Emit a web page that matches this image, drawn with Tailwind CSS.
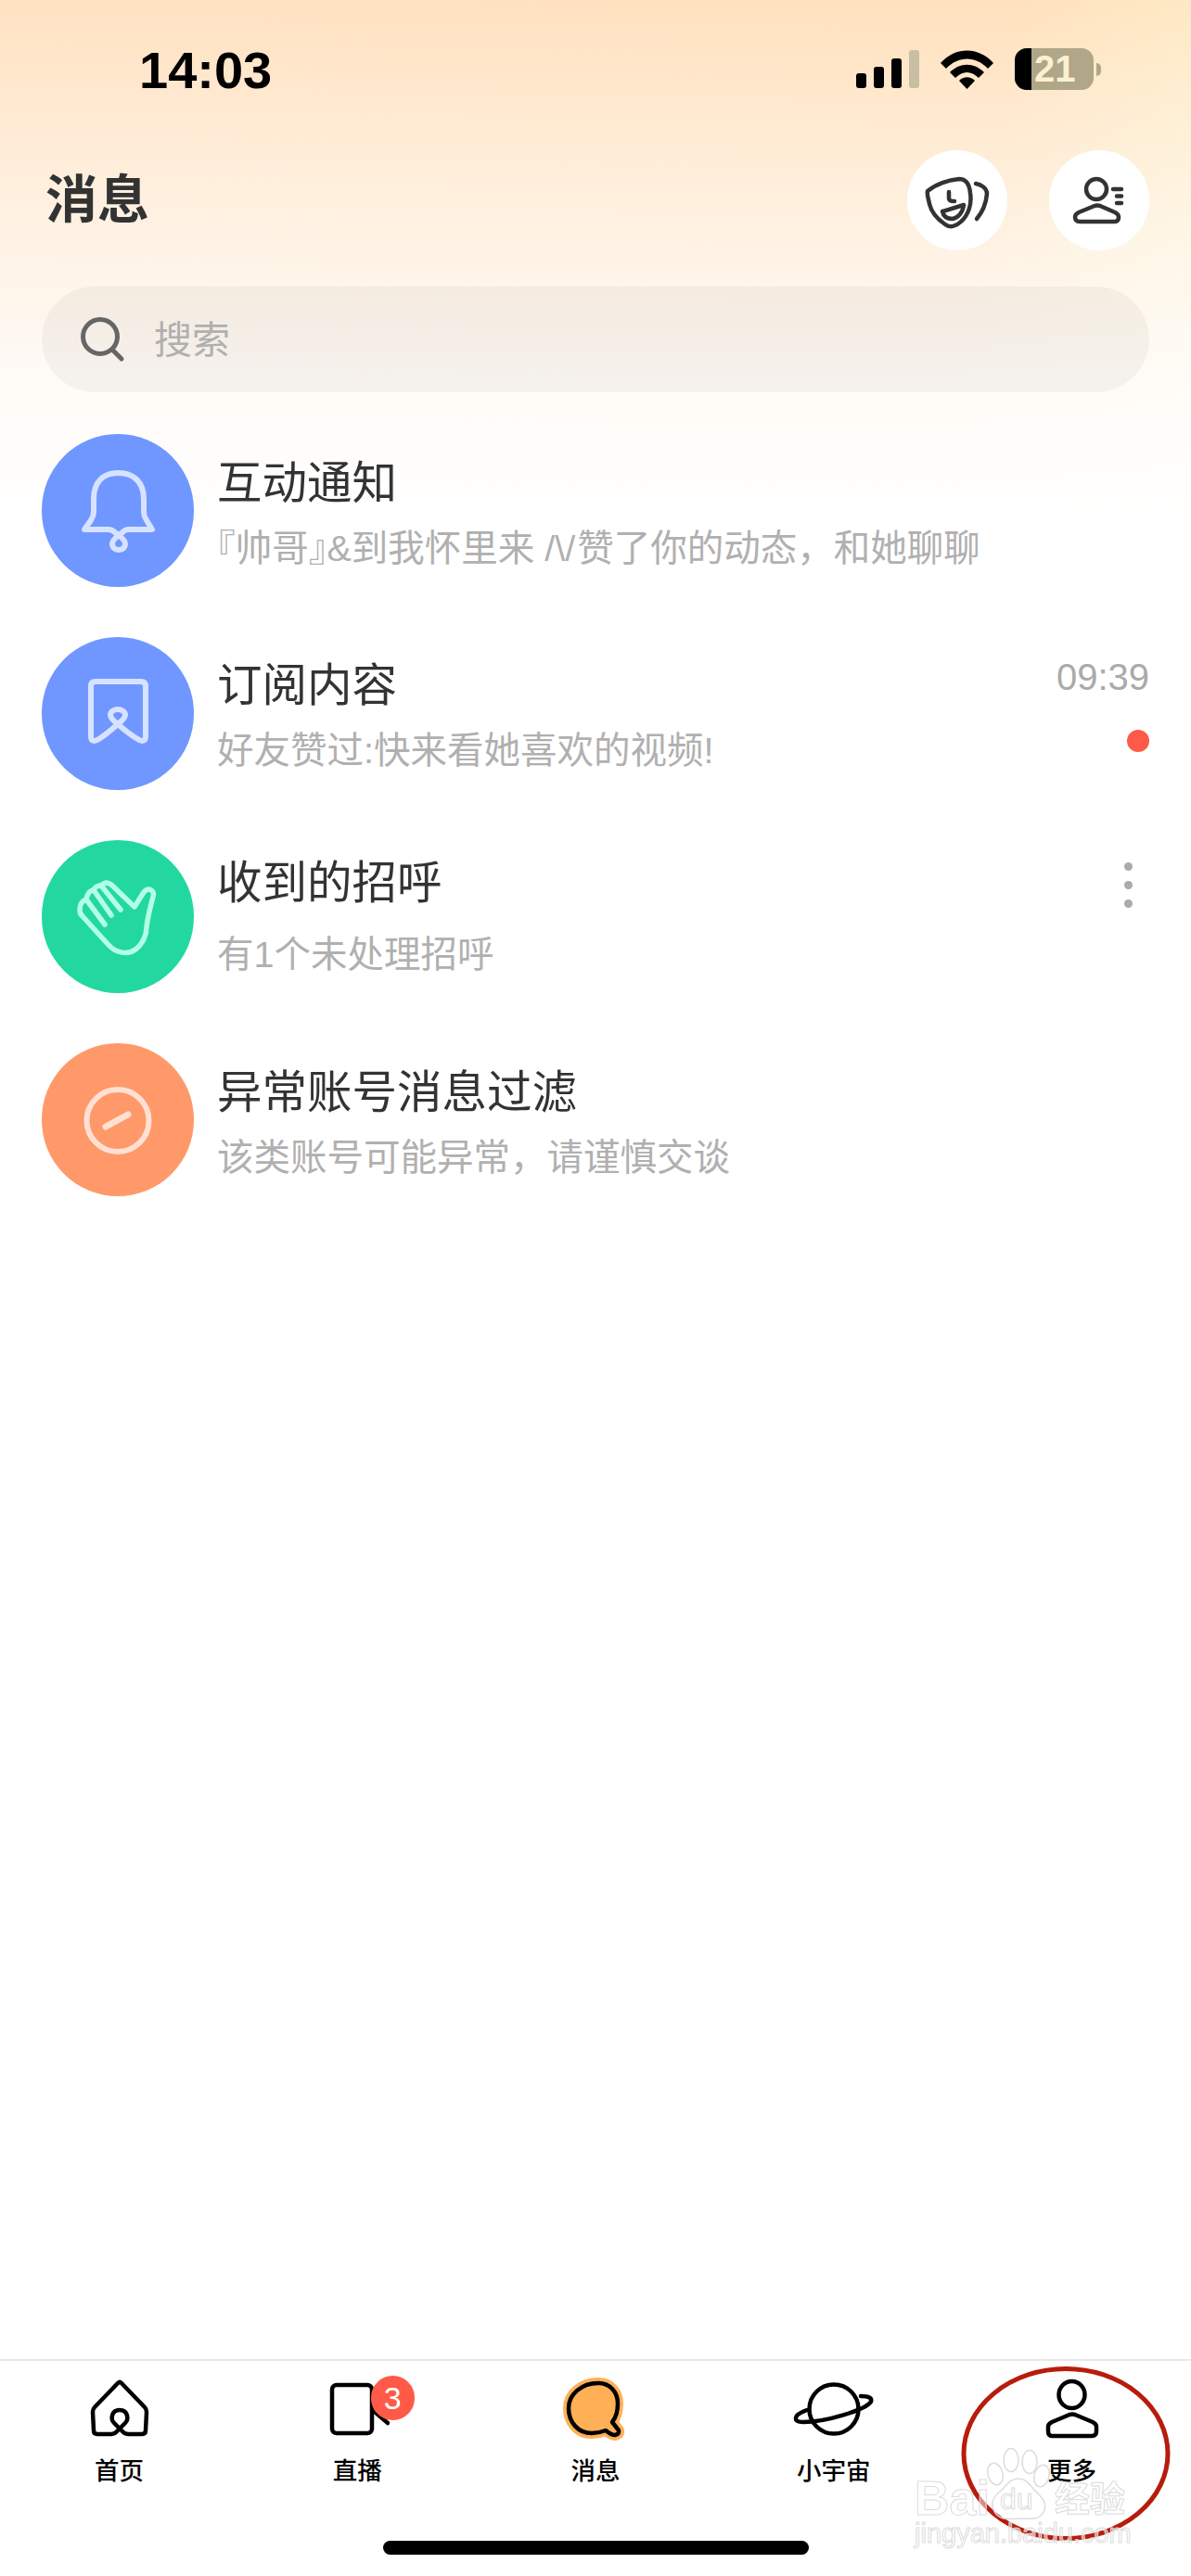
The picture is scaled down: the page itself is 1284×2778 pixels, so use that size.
<!DOCTYPE html>
<html lang="zh-CN">
<head>
    <meta charset="UTF-8">
    <meta name="viewport" content="width=device-width, initial-scale=1.0">
    <title>消息</title>
    <script src="https://cdn.jsdelivr.net/npm/@tailwindcss/browser@4"></script>
</head>
<body class="bg-white">
<div class="relative w-[1284px] h-[2778px] overflow-hidden flex flex-col bg-white bg-[linear-gradient(to_bottom,rgba(255,255,255,0),rgba(255,255,255,0.45)_200px,rgba(255,255,255,0.85)_400px,#fff_560px),linear-gradient(100deg,#ffe2c2,#ffe1bd_62%,#fdf5cf_88%)] font-['Liberation_Sans','Noto_Sans_CJK_SC',sans-serif]">

    <!-- status bar -->
    <div class="h-[162px] shrink-0 flex items-start pt-[48px] pl-[150px] pr-[97px] text-black">
        <span class="text-[56px] leading-[56px] font-bold">14:03</span>
        <div class="ml-auto flex items-center gap-[23px] pt-[4px]">
            <div class="flex items-end gap-[8px] h-[41px]">
                <div class="w-[11px] h-[16px] rounded-[3px] bg-black"></div>
                <div class="w-[11px] h-[23px] rounded-[3px] bg-black"></div>
                <div class="w-[11px] h-[32px] rounded-[3px] bg-black"></div>
                <div class="w-[11px] h-[41px] rounded-[3px] bg-[#c9bda3]"></div>
            </div>
            <svg class="w-[57px] h-[42px]" viewBox="0 0 57 42">
                <path d="M0 14 C16 -4 41 -4 57 14 L51 20 C38 6 19 6 6 20Z M10 24 C21 13 36 13 47 24 L41 30 C33 22 24 22 16 30Z M20 33 C25 28 32 28 37 33 L28.500 42Z" fill="#000"/>
            </svg>
            <div class="flex items-center">
                <div class="relative w-[85px] h-[45px] rounded-[13px] overflow-hidden bg-[#b0a688] flex">
                    <div class="w-[18px] h-full bg-black"></div>
                    <span class="ml-[3px] text-[40px] leading-[45px] font-bold text-[#fbf1d2]">21</span>
                </div>
                <div class="ml-[3px] w-[5px] h-[14px] rounded-r-full bg-[#b0a688]"></div>
            </div>
        </div>
    </div>

    <!-- header -->
    <div class="h-[108px] shrink-0 flex items-center pl-[49px] pr-[45px]">
        <h1 class="text-[56px] leading-[56px] font-bold text-[#333]">消息</h1>
        <div class="ml-auto flex gap-[45px]">
            <button class="w-[108px] h-[108px] rounded-full bg-white">
                <svg class="w-full h-full" viewBox="0 0 108 108" fill="none" stroke="#333" stroke-width="4.500" stroke-linecap="round" stroke-linejoin="round">
                    <path d="M22 44 C32 36 46 32 56 31 C63 31 67 36 68 46 C70 58 66 70 58 77 C53 82 46 84 41 80 C32 74 26 66 24 58 C23 52 21 48 22 44Z"/>
                    <path d="M74 36 C80 37 86 41 86 47 C85 58 81 67 75 74"/>
                    <path d="M45 45 V52 Q45 55 51 55"/>
                    <path d="M38 66 L61 59 C60 67 55 73 49 74 C43 74 39 71 38 66Z"/>
                </svg>
            </button>
            <button class="w-[108px] h-[108px] rounded-full bg-white">
                <svg class="w-full h-full" viewBox="0 0 108 108" fill="none" stroke="#333" stroke-width="4.500" stroke-linecap="round" stroke-linejoin="round">
                    <circle cx="51" cy="42" r="11"/>
                    <path d="M33 77 H71 Q75 77 75 72 Q75 69 71 67 L55 60 Q52 59 49 60 L32 67 Q28 69 28 72 Q28 77 33 77Z"/>
                    <path d="M69 42 H78 M73 49.500 H78 M73 57 H78"/>
                </svg>
            </button>
        </div>
    </div>

    <!-- search -->
    <div class="mt-[39px] mx-[45px] h-[114px] shrink-0 rounded-[57px] bg-black/[0.04] flex items-center pl-[41px]">
        <svg class="w-[50px] h-[50px]" viewBox="0 0 50 50" fill="none" stroke="#666" stroke-width="5" stroke-linecap="round">
            <circle cx="22" cy="22" r="18.500"/>
            <path d="M36 37 L45 46"/>
        </svg>
        <span class="ml-[30px] pt-[2px] text-[41px] leading-[41px] text-[#b0b0b0]">搜索</span>
    </div>

    <!-- list -->
    <div class="mt-[45px] px-[45px] flex flex-col gap-[54px]">
        <div class="h-[165px] flex gap-[25px]">
            <div class="w-[164px] h-[165px] shrink-0 rounded-full bg-[#7097ff]">
                <svg class="w-full h-full" viewBox="0 0 164 165" fill="none" stroke="#d6e2ff" stroke-width="6" stroke-linecap="round" stroke-linejoin="round">
                    <path d="M56 70 C56 52 66 42 82.500 42 C99 42 110 52 110 70 L110 84 C110 88 111 90 113 93 L119 103 H93 C90 103 88 105 86 107 C82 110 76 114 76 118 C76 123 79 125 83 125 C87 125 90 123 90 118 C90 114 84 110 80 107 C78 105 76 103 72 103 H46 L53 93 C55 90 56 88 56 84Z"/>
                </svg>
            </div>
            <div class="flex-1 pt-[29px]">
                <div class="text-[48.500px] leading-[48px] text-[#333]">互动通知</div>
                <div class="mt-[26px] text-[39.500px] leading-[40px] text-[#b0b0b0] whitespace-nowrap"><span class="[font-feature-settings:'halt']">『</span>帅哥<span class="[font-feature-settings:'halt']">』</span>&amp;到我怀里来 /\/<span class="ml-[2px]">赞了你的动态，和她聊聊</span></div>
            </div>
        </div>

        <div class="h-[165px] flex gap-[25px]">
            <div class="w-[164px] h-[165px] shrink-0 rounded-full bg-[#7097ff]">
                <svg class="w-full h-full" viewBox="0 0 164 165" fill="none" stroke="#d6e2ff" stroke-width="6" stroke-linecap="round" stroke-linejoin="round">
                    <path d="M53 53 Q53 48 58 48 H107 Q112 48 112 53 V107 Q112 114 105 111 C98 107 90 101 82 94 C77 90 74 87 74 84 C74 81 77 78 82 78 C87 78 90 81 90 84 C90 87 87 90 82 94 C74 101 67 107 60 111 Q53 114 53 107Z"/>
                </svg>
            </div>
            <div class="flex-1 pt-[28px]">
                <div class="text-[48.500px] leading-[48px] text-[#333]">订阅内容</div>
                <div class="mt-[26px] text-[39.500px] leading-[40px] text-[#b0b0b0] whitespace-nowrap">好友赞过:快来看她喜欢的视频!</div>
            </div>
            <div class="flex flex-col items-end pt-[23px]">
                <span class="text-[40px] leading-[40px] text-[#aaa]">09:39</span>
                <div class="mt-[37px] w-[24px] h-[24px] rounded-full bg-[#ff5a47]"></div>
            </div>
        </div>

        <div class="h-[165px] flex gap-[25px]">
            <div class="w-[164px] h-[165px] shrink-0 rounded-full bg-[#22d8a0]">
                <svg class="w-full h-full" viewBox="0 0 164 165" fill="none" stroke="#b3ffe6" stroke-width="5.500" stroke-linecap="round" stroke-linejoin="round">
                    <g transform="translate(25 34)">
                        <path d="M18 47 L47 79 C55 88 68 90 76 84 C84 78 88 68 88 60 C89 50 92 38 95 27 C97 20 90 17 86 21 C82 26 79 32 75 38 L50 14 C46 11 42 12 39 15 L60 41"/>
                        <path d="M39 15 C35 15 32 17 31 20 L50 47"/>
                        <path d="M31 20 C27 20 24 24 23 30 L43 57"/>
                        <path d="M23 30 C19 31 16 35 16 41 C16 44 17 46 18 47"/>
                    </g>
                </svg>
            </div>
            <div class="flex-1 pt-[22px]">
                <div class="text-[48.500px] leading-[48px] text-[#333]">收到的招呼</div>
                <div class="mt-[33px] text-[39.500px] leading-[40px] text-[#b0b0b0] whitespace-nowrap">有1个未处理招呼</div>
            </div>
            <div class="flex flex-col gap-[11px] pt-[24px] pr-[18px]">
                <div class="w-[9px] h-[9px] rounded-full bg-[#aaa]"></div>
                <div class="w-[9px] h-[9px] rounded-full bg-[#aaa]"></div>
                <div class="w-[9px] h-[9px] rounded-full bg-[#aaa]"></div>
            </div>
        </div>

        <div class="h-[165px] flex gap-[25px]">
            <div class="w-[164px] h-[165px] shrink-0 rounded-full bg-[#ff996a]">
                <svg class="w-full h-full" viewBox="0 0 164 165" fill="none" stroke="#ffe0d2" stroke-width="6" stroke-linecap="round">
                    <circle cx="82" cy="83.500" r="33.500"/>
                    <path d="M69 90 L93 77" stroke-width="7"/>
                </svg>
            </div>
            <div class="flex-1 pt-[29px]">
                <div class="text-[48.500px] leading-[48px] text-[#333]">异常账号消息过滤</div>
                <div class="mt-[26px] text-[39.500px] leading-[40px] text-[#b0b0b0] whitespace-nowrap">该类账号可能异常，请谨慎交谈</div>
            </div>
        </div>
    </div>

    <div class="flex-1"></div>

    <!-- tab bar -->
    <nav class="shrink-0 h-[234px] border-t-2 border-[#e8e8e8] bg-white pt-[9px] flex flex-col">
        <div class="grid grid-cols-5">
            <div class="flex flex-col items-center">
                <svg class="w-[100px] h-[80px]" viewBox="0 0 100 80" fill="none" stroke="#000" stroke-width="4.500" stroke-linecap="round" stroke-linejoin="round">
                    <path d="M49 15 Q51 13 53 15 L78 41 Q80 43 80 46 L79 66 Q79 70 75 70 H60 Q56 70 53 66 L45 58 C41 54 42 44 51 44 C60 44 61 54 57 58 L49 66 Q46 70 42 70 H27 Q23 70 23 66 L22 46 Q22 43 24 41Z"/>
                </svg>
                <span class="mt-[17px] text-[26.500px] leading-[26px] font-medium text-black">首页</span>
            </div>
            <div class="relative flex flex-col items-center">
                <svg class="w-[100px] h-[80px]" viewBox="0 0 100 80" fill="none" stroke="#000" stroke-width="4.500" stroke-linecap="round" stroke-linejoin="round">
                    <rect x="23" y="17" width="43" height="52" rx="5"/>
                    <path d="M69 46 L83 58"/>
                </svg>
                <span class="absolute left-[143px] top-[7px] w-[47px] h-[48px] rounded-full bg-[#ff5a47] text-white text-[34px] leading-[48px] text-center">3</span>
                <span class="mt-[17px] text-[26.500px] leading-[26px] font-medium text-black">直播</span>
            </div>
            <div class="flex flex-col items-center">
                <svg class="w-[100px] h-[80px]" viewBox="0 0 100 80" fill="none" stroke-linecap="round" stroke-linejoin="round">
                    <g transform="translate(-2 -5)">
                        <path d="M55 20 C68 20 76 30 76 42 C76 50 74 57 70 62 L77 71 Q78 75 73 76 Q69 76 63 71 C58 73 53 74 48 74 C33 74 23 62 23 47 C23 32 37 20 55 20Z" fill="#ffb057" stroke="#ffb057" stroke-width="12"/>
                        <path d="M55 20 C68 20 76 30 76 42 C76 50 74 57 70 62 L77 71 Q78 75 73 76 Q69 76 63 71 C58 73 53 74 48 74 C33 74 23 62 23 47 C23 32 37 20 55 20Z" stroke="#000" stroke-width="4.500"/>
                    </g>
                </svg>
                <span class="mt-[17px] text-[26.500px] leading-[26px] font-medium text-black">消息</span>
            </div>
            <div class="flex flex-col items-center">
                <svg class="w-[100px] h-[80px]" viewBox="0 0 100 80" fill="none" stroke="#000" stroke-width="4.500" stroke-linecap="round" stroke-linejoin="round">
                    <g transform="translate(-9 0)">
                        <circle cx="59" cy="43" r="26.500"/>
                        <path d="M88 29 Q101 29 99 35 C93 44 50 57 26 57 Q15 57 19 50 Q22 47 30 44"/>
                    </g>
                </svg>
                <span class="mt-[17px] text-[26.500px] leading-[26px] font-medium text-black">小宇宙</span>
            </div>
            <div class="flex flex-col items-center">
                <svg class="w-[100px] h-[80px]" viewBox="0 0 100 80" fill="none" stroke="#000" stroke-width="4.500" stroke-linecap="round" stroke-linejoin="round">
                    <ellipse cx="49.500" cy="27.500" rx="14" ry="14.500"/>
                    <path d="M28 72 H71 Q76 72 76 67 V62 Q76 59 72 57 L53 49 Q50 48 47 49 L28 57 Q24 59 24 62 V67 Q24 72 28 72Z"/>
                </svg>
                <span class="mt-[17px] text-[26.500px] leading-[26px] font-medium text-black">更多</span>
            </div>
        </div>
        <div class="mt-[62px] self-center w-[459px] h-[15px] rounded-full bg-black"></div>
    </nav>

    <!-- annotation and watermark on top of the screenshot -->
    <svg class="absolute left-[1035px] top-[2550px] w-[228px] h-[192px]" viewBox="0 0 228 192" fill="none">
        <ellipse cx="114" cy="96" rx="110" ry="91.500" stroke="#b71c0c" stroke-width="5"/>
    </svg>
    <svg class="absolute left-[1060px] top-[2635px] w-[110px] h-[90px]" viewBox="0 0 110 90" fill="none" stroke="#dcdcdc" stroke-width="1.500">
        <ellipse cx="13" cy="33" rx="8" ry="12" transform="rotate(-15 13 33)"/>
        <ellipse cx="30" cy="18" rx="8" ry="12.500"/>
        <ellipse cx="50" cy="20" rx="8" ry="12.500"/>
        <ellipse cx="63" cy="35" rx="8" ry="12" transform="rotate(15 63 35)"/>
        <path d="M38 38 C28 38 25 46 19 51 C10 58 7 66 13 75 C20 84 30 81 39 81 C48 81 60 84 65 74 C70 64 62 57 56 51 C50 45 47 38 38 38Z"/>
    </svg>
    <span class="absolute left-[986px] top-[2668px] text-[52px] leading-[52px] font-bold text-white/50 [-webkit-text-stroke:1px_#dcdcdc]">Bai</span>
    <span class="absolute left-[1078px] top-[2679px] text-[32px] leading-[32px] text-white/50 [-webkit-text-stroke:1px_#dcdcdc]">du</span>
    <span class="absolute left-[1137px] top-[2676px] text-[38px] leading-[38px] font-bold text-white/50 [-webkit-text-stroke:1px_#dcdcdc]">经验</span>
    <span class="absolute left-[986px] top-[2718px] text-[29px] leading-[29px] text-white/50 [-webkit-text-stroke:1px_#dcdcdc]">jingyan.baidu.com</span>
</div>
</body>
</html>
